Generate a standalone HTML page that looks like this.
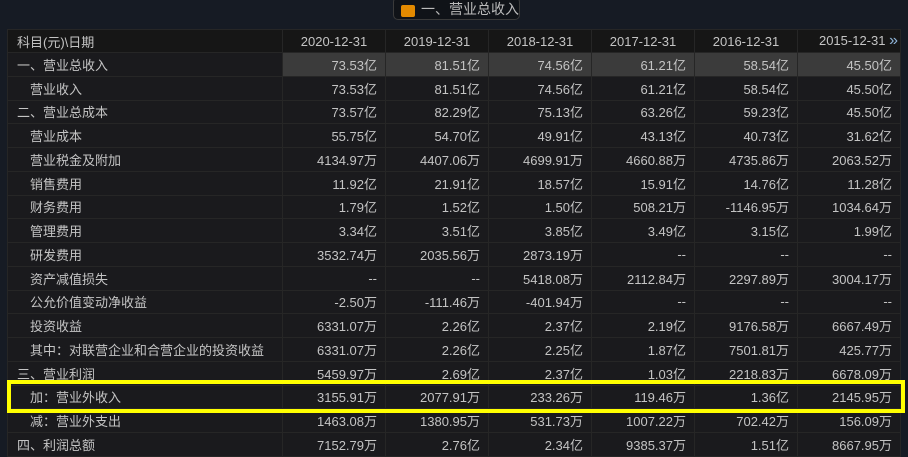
<!DOCTYPE html>
<html><head><meta charset="utf-8"><style>
body{margin:0;width:908px;height:456px;background:#161b24;overflow:hidden;font-family:"Liberation Sans","Noto Sans CJK SC",sans-serif;font-size:13px;color:#c4c4c4;position:relative}
.tab{position:absolute;left:393px;top:-3px;width:127px;height:23px;border:1px solid #3a3a3a;border-radius:5px;background:#101318;box-sizing:border-box;font-size:14px;line-height:22px;padding-left:27px;color:#bbb}
.tab i{position:absolute;left:7px;top:7px;width:14px;height:12px;background:#e38a00;border-radius:2px}
table{position:absolute;left:7px;top:29px;border-collapse:collapse;table-layout:fixed}
td{height:22.76px;border:1px solid #262626;padding:0 8px 0 0;text-align:right;white-space:nowrap;background:#1a1a1d;overflow:hidden}
td:first-child{text-align:left;padding-left:9px}
tr.h td{background:#161616;text-align:center;padding:0;height:22px}
tr.h td:first-child{text-align:left;padding-left:9px}
tr.g td:not(:first-child){background:#3b3b3b}
.in{padding-left:22px!important}
.yb{position:absolute;left:7px;top:380px;width:898px;height:33px;border:4px solid #ffff00;box-sizing:border-box}
.ar{color:#8fb4d8;font-size:16px}
</style></head><body>
<div class="tab"><i></i>一、营业总收入</div>
<table>
<colgroup><col style="width:275px"><col style="width:103px"><col style="width:103px"><col style="width:103px"><col style="width:103px"><col style="width:103px"><col style="width:103px"></colgroup>
<tr class="h"><td>科目(元)\日期</td><td>2020-12-31</td><td>2019-12-31</td><td>2018-12-31</td><td>2017-12-31</td><td>2016-12-31</td><td style="text-align:right;padding-right:2px">2015-12-31 <span class="ar">»</span></td></tr>
<tr class="g"><td>一、营业总收入</td><td>73.53亿</td><td>81.51亿</td><td>74.56亿</td><td>61.21亿</td><td>58.54亿</td><td>45.50亿</td></tr>
<tr><td class="in">营业收入</td><td>73.53亿</td><td>81.51亿</td><td>74.56亿</td><td>61.21亿</td><td>58.54亿</td><td>45.50亿</td></tr>
<tr><td>二、营业总成本</td><td>73.57亿</td><td>82.29亿</td><td>75.13亿</td><td>63.26亿</td><td>59.23亿</td><td>45.50亿</td></tr>
<tr><td class="in">营业成本</td><td>55.75亿</td><td>54.70亿</td><td>49.91亿</td><td>43.13亿</td><td>40.73亿</td><td>31.62亿</td></tr>
<tr><td class="in">营业税金及附加</td><td>4134.97万</td><td>4407.06万</td><td>4699.91万</td><td>4660.88万</td><td>4735.86万</td><td>2063.52万</td></tr>
<tr><td class="in">销售费用</td><td>11.92亿</td><td>21.91亿</td><td>18.57亿</td><td>15.91亿</td><td>14.76亿</td><td>11.28亿</td></tr>
<tr><td class="in">财务费用</td><td>1.79亿</td><td>1.52亿</td><td>1.50亿</td><td>508.21万</td><td>-1146.95万</td><td>1034.64万</td></tr>
<tr><td class="in">管理费用</td><td>3.34亿</td><td>3.51亿</td><td>3.85亿</td><td>3.49亿</td><td>3.15亿</td><td>1.99亿</td></tr>
<tr><td class="in">研发费用</td><td>3532.74万</td><td>2035.56万</td><td>2873.19万</td><td>--</td><td>--</td><td>--</td></tr>
<tr><td class="in">资产减值损失</td><td>--</td><td>--</td><td>5418.08万</td><td>2112.84万</td><td>2297.89万</td><td>3004.17万</td></tr>
<tr><td class="in">公允价值变动净收益</td><td>-2.50万</td><td>-111.46万</td><td>-401.94万</td><td>--</td><td>--</td><td>--</td></tr>
<tr><td class="in">投资收益</td><td>6331.07万</td><td>2.26亿</td><td>2.37亿</td><td>2.19亿</td><td>9176.58万</td><td>6667.49万</td></tr>
<tr><td class="in">其中：对联营企业和合营企业的投资收益</td><td>6331.07万</td><td>2.26亿</td><td>2.25亿</td><td>1.87亿</td><td>7501.81万</td><td>425.77万</td></tr>
<tr><td>三、营业利润</td><td>5459.97万</td><td>2.69亿</td><td>2.37亿</td><td>1.03亿</td><td>2218.83万</td><td>6678.09万</td></tr>
<tr><td class="in">加：营业外收入</td><td>3155.91万</td><td>2077.91万</td><td>233.26万</td><td>119.46万</td><td>1.36亿</td><td>2145.95万</td></tr>
<tr><td class="in">减：营业外支出</td><td>1463.08万</td><td>1380.95万</td><td>531.73万</td><td>1007.22万</td><td>702.42万</td><td>156.09万</td></tr>
<tr><td>四、利润总额</td><td>7152.79万</td><td>2.76亿</td><td>2.34亿</td><td>9385.37万</td><td>1.51亿</td><td>8667.95万</td></tr>
</table>
<div class="yb"></div>
</body></html>
